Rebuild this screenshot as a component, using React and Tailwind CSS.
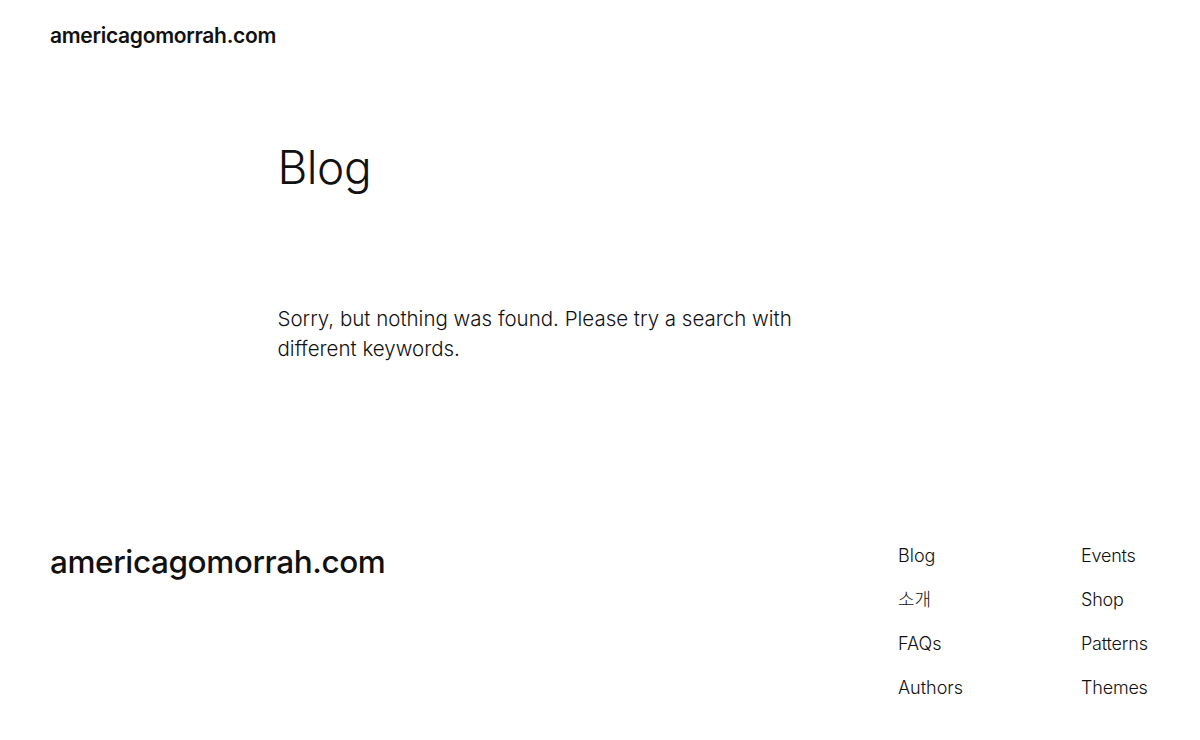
export default function App() {
  const col1 = ["Blog", "소개", "FAQs", "Authors"];
  const col2 = ["Events", "Shop", "Patterns", "Themes"];

  return (
    <div className="min-h-[740px] bg-white text-[#111111] flex flex-col" style={{ fontFamily: "Inter, 'Noto Sans CJK KR', sans-serif" }}>
      <header className="px-[50px] pt-[20px] pb-[20px]">
        <a className="text-[21px] font-semibold tracking-[-0.3px]">americagomorrah.com</a>
      </header>

      <main className="w-[645px] mx-auto">
        <h1 className="mt-[68px] text-[46px] font-light tracking-[-0.5px] leading-[1.2]">Blog</h1>
        <p className="mt-[109px] max-w-[540px] text-[20.5px] font-light leading-[30px]">
          Sorry, but nothing was found. Please try a search with different keywords.
        </p>
      </main>

      <footer className="mt-[180px] px-[50px] flex justify-between items-start">
        <div className="text-[31.5px] font-medium tracking-[-0.4px] leading-none pt-[2px]">americagomorrah.com</div>
        <div className="flex">
          <ul className="w-[183px] flex flex-col gap-[20px] text-[18px] font-light leading-[24px]">
            {col1.map((t) => (
              <li key={t}>{t}</li>
            ))}
          </ul>
          <ul className="w-[69px] flex flex-col gap-[20px] text-[18px] font-light leading-[24px] whitespace-nowrap tracking-[-0.2px]">
            {col2.map((t) => (
              <li key={t}>{t}</li>
            ))}
          </ul>
        </div>
      </footer>
    </div>
  );
}
